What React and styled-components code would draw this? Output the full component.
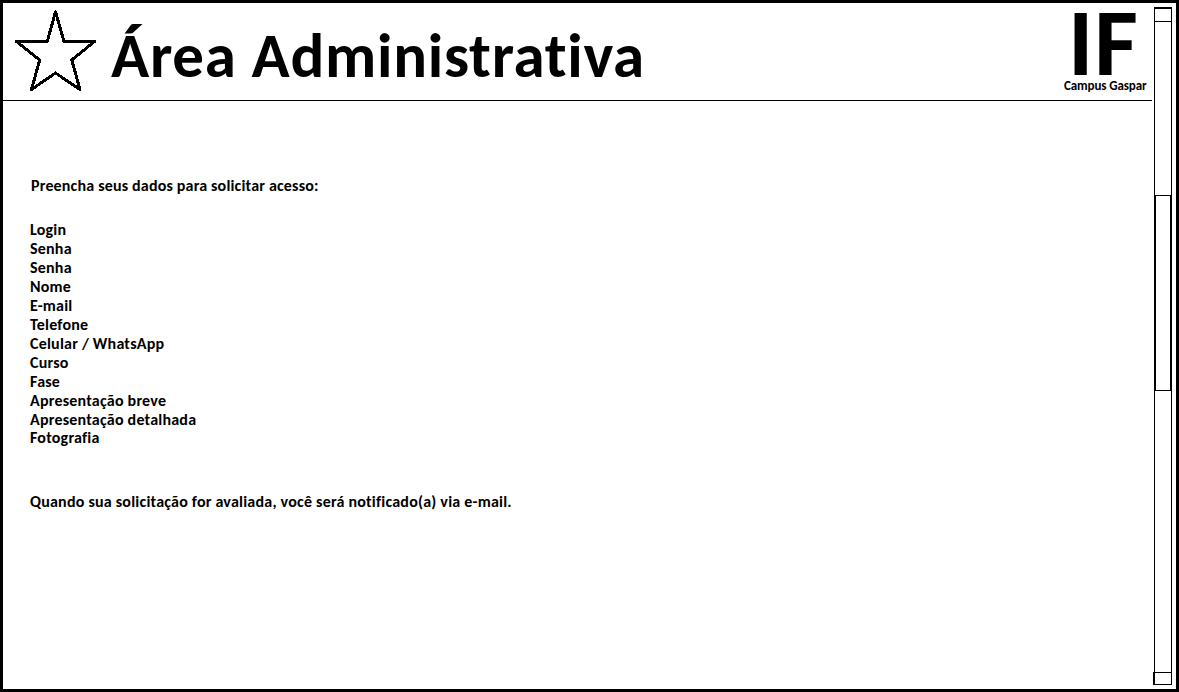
import React from "react";
import styled, { createGlobalStyle } from "styled-components";

const GlobalStyle = createGlobalStyle`
  * { box-sizing: border-box; }
  body { margin: 0; background: #fff; }
`;

const Frame = styled.div`
  display: flex;
  width: 1179px;
  height: 692px;
  border: 3px solid #000;
  background: #fff;
  color: #000;
  font-family: "Carlito", "Calibri", "Lato", sans-serif;
  font-weight: 700;
  font-variant-ligatures: none;
`;

const Page = styled.div`
  width: 1149px;
  display: flex;
  flex-direction: column;
`;

const Header = styled.header`
  display: flex;
  height: 98px;
  border-bottom: 1px solid #000;
`;

const StarIcon = styled.svg`
  flex: none;
  display: block;
  width: 100px;
  height: 97px;
`;

const Title = styled.h1`
  margin: 14px 0 0 8px;
  font-size: 63px;
  line-height: 78px;
  font-weight: 700;
  letter-spacing: 0.73px;
  white-space: nowrap;
`;

const Brand = styled.div`
  margin-left: auto;
  width: 88px;
  display: flex;
  flex-direction: column;
`;

const BrandMark = styled.div`
  height: 75px;
  padding-left: 4px;
  font-size: 95px;
  line-height: 81px;
  letter-spacing: 0.8px;
`;

const BrandCaption = styled.div`
  font-size: 13px;
  line-height: 15px;
  letter-spacing: -0.1px;
  white-space: nowrap;
`;

const Content = styled.main`
  padding: 75px 0 0 27px;
  font-size: 16px;
  line-height: 19px;
  letter-spacing: 0.22px;
`;

const Intro = styled.p`
  margin: 0;
  padding-left: 1px;
  letter-spacing: 0.18px;
`;

const Notice = styled.p`
  margin: 0;
`;

const FieldList = styled.ul`
  list-style: none;
  margin: 25px 0 45px;
  padding: 0;
`;

const Field = styled.li`
  height: 19px;
  &:last-child { margin-top: -1px; }
`;

const Scrollbar = styled.div`
  display: flex;
  flex-direction: column;
  width: 18px;
  height: 678px;
  margin: 4px 0 0 2px;
`;

const ScrollUp = styled.div`
  height: 15px;
  border: 1px solid #000;
  border-top-width: 2px;
`;

const Track = styled.div`
  height: ${(p) => p.$height}px;
  border: solid #000;
  border-width: 0 1px;
`;

const Thumb = styled.div`
  height: 196px;
  border: solid #000;
  border-width: 1px 2px;
`;

const ScrollDown = styled.div`
  height: 13px;
  margin-left: -1px;
  border: 1px solid #000;
  border-left-width: 2px;
`;

const fields = [
  "Login",
  "Senha",
  "Senha",
  "Nome",
  "E-mail",
  "Telefone",
  "Celular / WhatsApp",
  "Curso",
  "Fase",
  "Apresentação breve",
  "Apresentação detalhada",
  "Fotografia",
];

export default function App() {
  return (
    <>
      <GlobalStyle />
      <Frame>
        <Page>
          <Header>
            <StarIcon viewBox="3 3 100 97" aria-hidden="true">
              <path
                d="M55.5 11.8L64 41.5H94.5L71.8 60L80 89.5L55.5 73L31.5 89.5L39.7 60L16.5 41.5H47.3Z"
                fill="none"
                stroke="#000"
                strokeWidth="3"
                strokeLinejoin="round"
                shapeRendering="crispEdges"
              />
            </StarIcon>
            <Title>Área Administrativa</Title>
            <Brand>
              <BrandMark>IF</BrandMark>
              <BrandCaption>Campus Gaspar</BrandCaption>
            </Brand>
          </Header>
          <Content>
            <Intro>Preencha seus dados para solicitar acesso:</Intro>
            <FieldList>
              {fields.map((name, i) => (
                <Field key={i}>{name}</Field>
              ))}
            </FieldList>
            <Notice>
              Quando sua solicitação for avaliada, você será notificado(a) via e-mail.
            </Notice>
          </Content>
        </Page>
        <Scrollbar>
          <ScrollUp />
          <Track $height={173} />
          <Thumb />
          <Track $height={281} />
          <ScrollDown />
        </Scrollbar>
      </Frame>
    </>
  );
}
